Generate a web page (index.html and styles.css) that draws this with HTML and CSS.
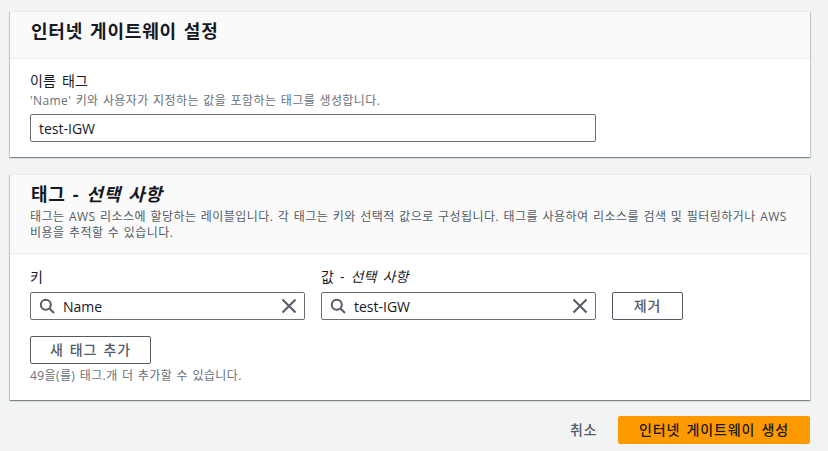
FILE: index.html
```html
<!DOCTYPE html>
<html lang="ko">
<head>
<meta charset="utf-8">
<title>인터넷 게이트웨이 생성</title>
<link rel="stylesheet" href="styles.css">
</head>
<body>
<main class="page">
  <section class="card card-settings">
    <header class="card-head head-settings">
      <h2 class="title">인터넷 게이트웨이 설정</h2>
    </header>
    <div class="card-body body-settings">
      <div class="label">이름 태그</div>
      <div class="hint">'Name' 키와 사용자가 지정하는 값을 포함하는 태그를 생성합니다.</div>
      <div class="input input-plain">test-IGW</div>
    </div>
  </section>

  <section class="card card-tags">
    <header class="card-head head-tags">
      <h2 class="title">태그 - <em>선택 사항</em></h2>
      <p class="desc">태그는 AWS 리소스에 할당하는 레이블입니다. 각 태그는 키와 선택적 값으로 구성됩니다. 태그를 사용하여 리소스를 검색 및 필터링하거나 AWS 비용을 추적할 수 있습니다.</p>
    </header>
    <div class="card-body body-tags">
      <div class="tag-row">
        <div class="field">
          <div class="label label-field">키</div>
          <div class="input input-search">
            <svg class="icon" viewBox="0 0 16 16" width="16" height="16"><circle cx="6.8" cy="6.8" r="5" /><path d="M10.5 10.5L15 15" /></svg>
            <span class="value">Name</span>
            <svg class="icon" viewBox="0 0 16 16" width="16" height="16"><path d="M1.5 1.5L14.5 14.5M14.5 1.5L1.5 14.5" /></svg>
          </div>
        </div>
        <div class="field">
          <div class="label label-field">값 - <em>선택 사항</em></div>
          <div class="input input-search">
            <svg class="icon" viewBox="0 0 16 16" width="16" height="16"><circle cx="6.8" cy="6.8" r="5" /><path d="M10.5 10.5L15 15" /></svg>
            <span class="value">test-IGW</span>
            <svg class="icon" viewBox="0 0 16 16" width="16" height="16"><path d="M1.5 1.5L14.5 14.5M14.5 1.5L1.5 14.5" /></svg>
          </div>
        </div>
        <button class="btn btn-remove" type="button">제거</button>
      </div>
      <button class="btn btn-add" type="button">새 태그 추가</button>
      <div class="hint hint-add">49을(를) 태그.개 더 추가할 수 있습니다.</div>
    </div>
  </section>

  <footer class="actions">
    <button class="btn-link" type="button">취소</button>
    <button class="btn-primary" type="button">인터넷 게이트웨이 생성</button>
  </footer>
</main>
</body>
</html>
```
FILE: styles.css
```css
* { box-sizing: border-box; }
html, body { margin: 0; height: 451px; overflow: hidden; }
body {
  background: #f2f3f3;
  color: #16191f;
  font-family: "Open Sans", "Noto Sans CJK KR", sans-serif;
  font-size: 14px;
}
.page { padding: 11px 18px 0 10px; }
.card {
  background: #fff;
  border-top: 1px solid #eaeded;
  box-shadow: 0 1px 1px 0 rgba(0, 28, 36, .3), 1px 1px 1px 0 rgba(0, 28, 36, .15), -1px 1px 1px 0 rgba(0, 28, 36, .15);
}
.card-settings { height: 146px; margin-bottom: 17px; }
.card-tags { height: 226px; margin-bottom: 16px; }
.card-head { background: #fafafa; border-bottom: 1px solid #eaeded; padding: 0 20px; }
.head-settings { height: 47px; padding-top: 6px; }
.head-tags { height: 79px; padding-top: 6px; }
.title { margin: 0; font-size: 18px; font-weight: 700; line-height: 26px; letter-spacing: .8px; word-spacing: 1.5px; padding-left: 1px; }
.title em, .label em { font-style: italic; }
.desc { margin: 2px 0 0; font-size: 12px; line-height: 16px; color: #545b64; letter-spacing: .45px; word-spacing: .9px; }
.card-body { padding: 0 20px; }
.body-settings { padding-top: 12px; }
.label { font-size: 14px; line-height: 20px; letter-spacing: .2px; word-spacing: 2px; }
.hint { font-size: 12px; line-height: 16px; color: #687078; letter-spacing: .4px; word-spacing: .9px; margin-top: 2px; }
.input {
  display: flex;
  align-items: center;
  height: 28px;
  background: #fff;
  border: 1px solid #687078;
  border-radius: 2px;
  font-size: 14px;
}
.input-plain { width: 566px; margin-top: 5px; padding-left: 8px; }
.body-tags { padding-top: 13px; }
.tag-row { display: flex; align-items: flex-end; gap: 16px; }
.field { width: 275px; }
.label-field { margin-bottom: 5px; }
.input-search { padding: 0 7px 0 8px; gap: 8px; }
.value { flex: 1; }
.icon { fill: none; stroke: #545b64; stroke-width: 2; flex: none; }
.btn {
  display: block;
  height: 28px;
  background: #fff;
  border: 1px solid #545b64;
  border-radius: 2px;
  color: #545b64;
  font: 500 14px/1 "Open Sans", "Noto Sans CJK KR", sans-serif;
  letter-spacing: .9px;
  word-spacing: 1.5px;
  padding: 0;
}
.btn-remove { width: 71px; }
.btn-add { width: 121px; margin-top: 16px; }
.hint-add { margin-top: 4px; }
.actions { display: flex; justify-content: flex-end; align-items: center; gap: 21px; }
.btn-link {
  background: none;
  border: 0;
  padding: 0;
  color: #545b64;
  font: 500 14px/1 "Open Sans", "Noto Sans CJK KR", sans-serif;
  letter-spacing: .6px;
}
.btn-primary {
  width: 192px;
  height: 28px;
  background: #ff9900;
  border: 0;
  border-radius: 2px;
  color: #16191f;
  font: 500 14px/1 "Open Sans", "Noto Sans CJK KR", sans-serif;
  letter-spacing: .9px;
  word-spacing: 1.5px;
  padding: 0;
}
```
